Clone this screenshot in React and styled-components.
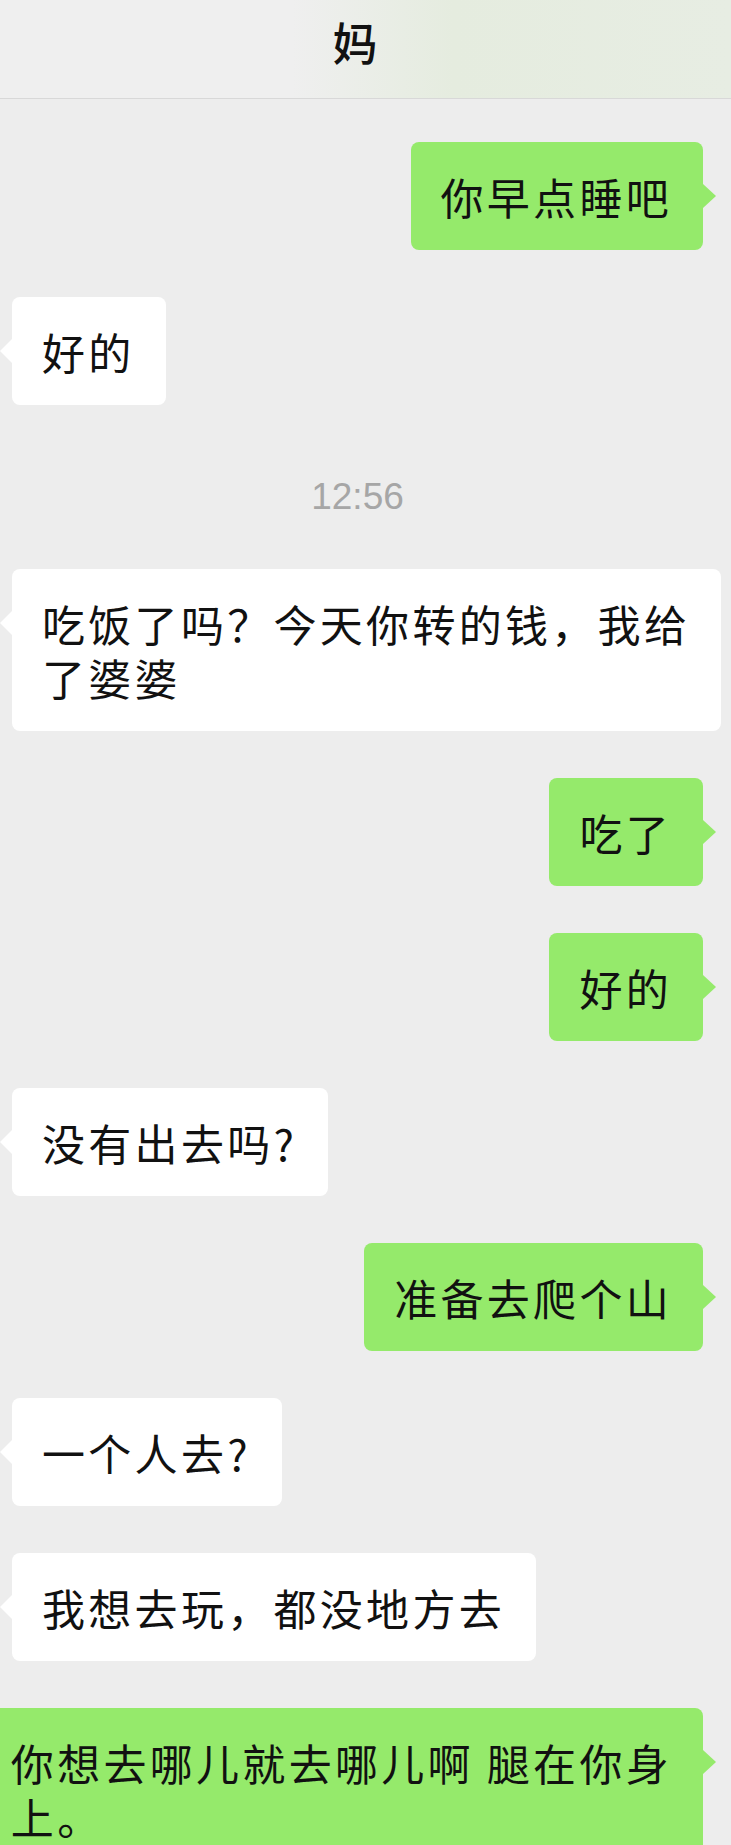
import React from 'react';
import styled, { createGlobalStyle } from 'styled-components';

const GlobalStyle = createGlobalStyle`
  html, body {
    margin: 0;
    padding: 0;
    overflow: hidden;
    background: #ededed;
  }
  body {
    font-family: "Noto Sans CJK SC", "Liberation Sans", sans-serif;
  }
`;

const Page = styled.div`
  display: flex;
  flex-direction: column;
  width: 731px;
  height: 1845px;
  overflow: hidden;
  background: #ededed;
`;

const Header = styled.header`
  display: flex;
  align-items: center;
  justify-content: center;
  flex-shrink: 0;
  height: 99px;
  padding: 0 21px 15px 0;
  box-sizing: border-box;
  border-bottom: 1px solid #d8d8d8;
  background: linear-gradient(
    90deg,
    #efefef 0%,
    #efefef 40%,
    #e5ecdf 62%,
    #e7ede3 100%
  );
`;

const Title = styled.h1`
  margin: 0;
  font-size: 45px;
  font-weight: 500;
  line-height: 1;
  color: #111;
`;

const Chat = styled.main`
  display: flex;
  flex-direction: column;
  gap: 47px;
  padding: 43px 28px 0 12px;
`;

const Row = styled.div`
  display: flex;
  justify-content: ${(p) => (p.$mine ? 'flex-end' : 'flex-start')};
`;

const Bubble = styled.div`
  position: relative;
  flex-shrink: 0;
  padding: 27px 31px 27px 30px;
  border-radius: 8px;
  background: ${(p) => (p.$mine ? '#95ea6b' : '#ffffff')};
  color: #111;
  font-size: 43px;
  line-height: 54px;
  letter-spacing: 3.3px;
  white-space: nowrap;

  &::after {
    content: '';
    position: absolute;
    top: 42px;
    width: 0;
    height: 0;
    border-top: 12px solid transparent;
    border-bottom: 12px solid transparent;
    ${(p) =>
      p.$mine
        ? 'right: -13px; border-left: 13px solid #95ea6b;'
        : 'left: -12px; border-right: 12px solid #ffffff;'}
  }
`;

const Time = styled.div`
  align-self: center;
  margin-top: 20px;
  font-family: "Liberation Sans", sans-serif;
  font-size: 37px;
  line-height: 50px;
  color: #a6a6a6;
`;

const messages = [
  { mine: true, lines: ['你早点睡吧'] },
  { mine: false, lines: ['好的'] },
  { time: '12:56' },
  { mine: false, lines: ['吃饭了吗？今天你转的钱，我给', '了婆婆'] },
  { mine: true, lines: ['吃了'] },
  { mine: true, lines: ['好的'] },
  { mine: false, lines: ['没有出去吗?'] },
  { mine: true, lines: ['准备去爬个山'] },
  { mine: false, lines: ['一个人去?'] },
  { mine: false, lines: ['我想去玩，都没地方去'] },
  { mine: true, lines: ['你想去哪儿就去哪儿啊 腿在你身', '上。'] },
];

export default function App() {
  return (
    <>
      <GlobalStyle />
      <Page>
        <Header>
          <Title>妈</Title>
        </Header>
        <Chat>
          {messages.map((m, i) =>
            m.time ? (
              <Time key={i}>{m.time}</Time>
            ) : (
              <Row key={i} $mine={m.mine}>
                <Bubble $mine={m.mine}>
                  {m.lines.map((line, j) => (
                    <React.Fragment key={j}>
                      {j > 0 && <br />}
                      {line}
                    </React.Fragment>
                  ))}
                </Bubble>
              </Row>
            )
          )}
        </Chat>
      </Page>
    </>
  );
}
